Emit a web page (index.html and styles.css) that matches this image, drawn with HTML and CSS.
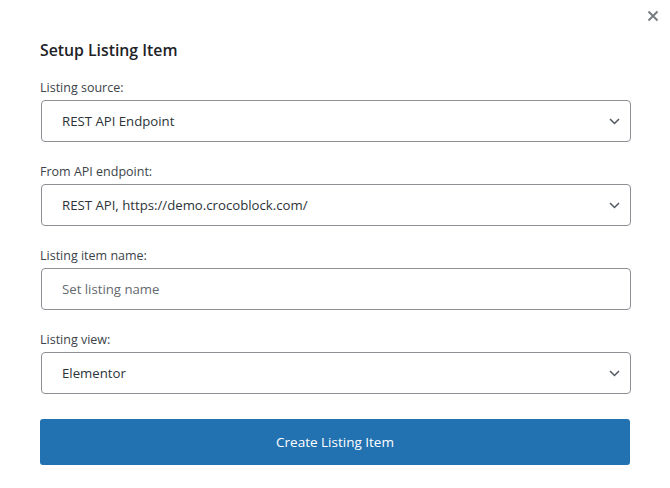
FILE: index.html
```html
<!DOCTYPE html>
<html lang="en">
<head>
<meta charset="utf-8">
<title>Setup Listing Item</title>
<link rel="stylesheet" href="styles.css">
</head>
<body>
<div class="modal">
  <button class="close" aria-label="Close">
    <svg width="12" height="12" viewBox="0 0 12 12"><path d="M1.5 1.5 L10.5 10.5 M10.5 1.5 L1.5 10.5" stroke="#787c82" stroke-width="2" fill="none"/></svg>
  </button>
  <h2 class="title">Setup Listing Item</h2>
  <div class="field">
    <div class="label">Listing source:</div>
    <div class="control select">
      <span class="value">REST API Endpoint</span>
      <svg class="chev" width="11" height="7" viewBox="0 0 11 7"><path d="M1 1 L5.5 5.5 L10 1" stroke="#50575e" stroke-width="1.5" fill="none"/></svg>
    </div>
  </div>
  <div class="field">
    <div class="label">From API endpoint:</div>
    <div class="control select">
      <span class="value">REST API, https://demo.crocoblock.com/</span>
      <svg class="chev" width="11" height="7" viewBox="0 0 11 7"><path d="M1 1 L5.5 5.5 L10 1" stroke="#50575e" stroke-width="1.5" fill="none"/></svg>
    </div>
  </div>
  <div class="field">
    <div class="label">Listing item name:</div>
    <div class="control">
      <span class="value placeholder">Set listing name</span>
    </div>
  </div>
  <div class="field">
    <div class="label">Listing view:</div>
    <div class="control select">
      <span class="value">Elementor</span>
      <svg class="chev" width="11" height="7" viewBox="0 0 11 7"><path d="M1 1 L5.5 5.5 L10 1" stroke="#50575e" stroke-width="1.5" fill="none"/></svg>
    </div>
  </div>
  <button class="submit">Create Listing Item</button>
</div>
</body>
</html>
```
FILE: styles.css
```css
html, body {
  margin: 0;
  padding: 0;
  background: #ffffff;
}
body {
  font-family: "Open Sans", "Noto Sans", sans-serif;
  color: #2c3338;
}
.modal {
  position: relative;
  width: 670px;
  height: 488px;
  box-sizing: border-box;
  padding: 39px 40px 0 40px;
}
.close {
  position: absolute;
  top: 10px;
  right: 11px;
  width: 12px;
  height: 12px;
  padding: 0;
  border: 0;
  background: none;
  display: flex;
}
.title {
  margin: 0 0 18px 0;
  font-size: 15.8px;
  line-height: 22px;
  font-weight: 600;
  color: #1d2327;
}
.field {
  margin-bottom: 21px;
}
.label {
  font-size: 12.5px;
  line-height: 18px;
  color: #3c434a;
  margin-bottom: 3px;
}
.control {
  margin-left: 1px;
  width: 590px;
  height: 42px;
  box-sizing: border-box;
  border: 1px solid #8c8f94;
  border-radius: 4px;
  display: flex;
  align-items: center;
  padding: 0 10px 0 20px;
}
.value {
  flex: 1;
  font-size: 13.2px;
  color: #2c3338;
}
.placeholder {
  color: #646970;
}
.submit {
  margin-top: 4px;
  width: 590px;
  height: 46px;
  border: 0;
  border-radius: 3px;
  background: #2271b1;
  color: #ffffff;
  font-family: "Open Sans", "Noto Sans", sans-serif;
  font-size: 13.5px;
  padding: 0;
}
```
